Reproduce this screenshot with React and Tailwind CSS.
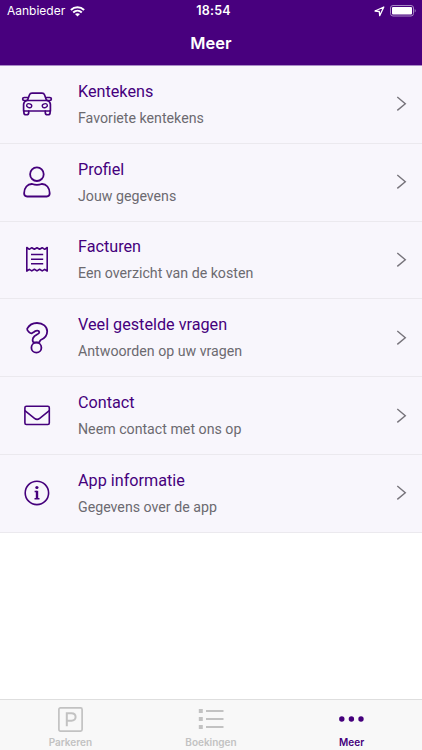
const iconProps = {
  className: 'h-9 w-9 shrink-0',
  viewBox: '0 0 36 36',
  fill: 'none',
  stroke: 'currentColor',
  strokeWidth: 1.8,
  strokeLinecap: 'round',
  strokeLinejoin: 'round',
}

function CarIcon() {
  return (
    <svg {...iconProps} strokeWidth={1.7}>
      <path d="M8.400 14.500l2-5.500c.5-1.300 1.300-1.800 2.600-1.800h10c1.300 0 2.100.5 2.600 1.800l2 5.500z" />
      <path d="M8.500 11.500H5.300c-2.200 0-2.200 3 0 3h2.200M27.500 11.500h3.200c2.200 0 2.200 3 0 3h-2.200" />
      <path d="M7.600 14.500c-2 .8-3 2-3 4V25h26.800v-6.500c0-2-1-3.200-3-4" />
      <path d="M4.900 25v1.700c0 2.700 4.800 2.700 4.800 0V25M26.300 25v1.700c0 2.700 4.800 2.700 4.800 0V25" />
      <g strokeWidth="1.300">
        <ellipse cx="10.200" cy="19.700" rx="2.600" ry="1.900" transform="rotate(18 10.200 19.700)" />
        <ellipse cx="25.800" cy="19.700" rx="2.600" ry="1.900" transform="rotate(-18 25.800 19.700)" />
      </g>
    </svg>
  )
}

function PersonIcon() {
  return (
    <svg {...iconProps}>
      <circle cx="17.900" cy="10.200" r="6.800" />
      <path d="M13.200 20c2.900 1.100 6.500 1.100 9.400 0 4.700-.3 8.100 3.900 8.100 9.300 0 2.200-.9 3.200-3 3.200H8.100c-2.100 0-3-1-3-3.200 0-5.400 3.400-9.600 8.100-9.300z" />
    </svg>
  )
}

function ReceiptIcon() {
  return (
    <svg {...iconProps} strokeWidth={1.600} strokeLinecap="butt">
      <path d="M7.800 5.500l2.500 1.800 2.500-1.600 2.600 1.600L18 5.700l2.600 1.600 2.600-1.600 2.500 1.600 2.500-1.800v23.600l-2.500-1.800-2.500 1.600-2.600-1.600-2.600 1.600-2.600-1.600-2.600 1.600-2.500-1.600-2.500 1.800z" />
      <path d="M12 12.500h12.200M12 17.200h12.200M12 21.800h12.200" />
    </svg>
  )
}

function QuestionIcon() {
  return (
    <svg {...iconProps}>
      <path d="M8.200 8.600C10.200 5 13.400 3 18 3c6 0 10.200 3.600 10.200 8.300 0 5-3.200 7.400-6.500 8.700-1 .4-.7 1.900-1.500 2.300h-5.700c-1-.5-1.100-2.700-.4-4.300 1.700-3.600 6.500-3.500 6.200-5.900-.3-2.100-3.700-2-5.800.2l-1.700 1c-1.400.5-5.200-2.900-4.600-4.700z" />
      <circle cx="17.400" cy="27.700" r="5" />
    </svg>
  )
}

function MailIcon() {
  return (
    <svg {...iconProps} strokeWidth={1.600}>
      <rect x="5.900" y="8.300" width="24.400" height="18.200" rx="1.500" />
      <path d="M6.200 12.900l9.300 7.400c1.800 1.400 3.400 1.400 5.200 0l9.300-7.400" />
    </svg>
  )
}

function InfoIcon() {
  return (
    <svg {...iconProps} strokeWidth={1.600}>
      <circle cx="17.900" cy="17.900" r="11.700" />
      <circle cx="17.900" cy="12.500" r="1.600" fill="currentColor" stroke="none" />
      <path d="M15.600 16.500H18M15.500 23.700h5" strokeWidth="1.400" strokeLinecap="butt" />
      <path d="M18 15.800v8" strokeWidth="2.400" strokeLinecap="butt" />
    </svg>
  )
}

const items = [
  { title: 'Kentekens', subtitle: 'Favoriete kentekens', Icon: CarIcon },
  { title: 'Profiel', subtitle: 'Jouw gegevens', Icon: PersonIcon },
  { title: 'Facturen', subtitle: 'Een overzicht van de kosten', Icon: ReceiptIcon },
  { title: 'Veel gestelde vragen', subtitle: 'Antwoorden op uw vragen', Icon: QuestionIcon },
  { title: 'Contact', subtitle: 'Neem contact met ons op', Icon: MailIcon },
  { title: 'App informatie', subtitle: 'Gegevens over de app', Icon: InfoIcon },
]

function StatusBar() {
  return (
    <div className="grid h-[22px] grid-cols-3 items-center pr-[6px] pl-[7px] text-[12.500px]">
      <div className="flex items-center gap-[5px]">
        <span className="text-[12px]">Aanbieder</span>
        <svg className="h-[11px] w-[15px]" viewBox="0 0 15 11" fill="none" stroke="currentColor" strokeWidth="2">
          <path d="M.9 4C4.700.4 10.300.4 14.100 4M3.200 6.500c2.500-2.400 6.100-2.400 8.600 0" />
          <path d="M7.500 10.600L5 8.100c1.400-1.300 3.600-1.300 5 0z" fill="currentColor" stroke="none" />
        </svg>
      </div>
      <span className="pl-1 text-center font-semibold tracking-[0.250px]">18:54</span>
      <div className="flex items-center justify-end gap-[5px]">
        <svg className="h-[11px] w-[11px]" viewBox="0 0 11 11" fill="none" stroke="currentColor" strokeWidth="1.300" strokeLinejoin="round">
          <path d="M9.800 1L1 5l4.300.5.400 4.200z" />
        </svg>
        <svg className="h-[12px] w-[26px]" viewBox="0 0 26 12">
          <rect x=".5" y=".5" width="23" height="10.500" rx="2.500" fill="none" stroke="#a688c4" />
          <rect x="2" y="2" width="20" height="7.500" rx="1" fill="white" />
          <path d="M24.700 4v3.500c1.300-.6 1.300-2.900 0-3.500z" fill="#a688c4" />
        </svg>
      </div>
    </div>
  )
}

function MenuRow({ title, subtitle, Icon }) {
  return (
    <li className="flex h-[77.800px] items-center border-b border-[#ebe9ee] pr-[15px] pl-[19px]">
      <span className="text-[#45007c]">
        <Icon />
      </span>
      <div className="ml-[23px] flex-1 pt-px">
        <p className="text-[16.200px] leading-[26px] text-[#45007c]">{title}</p>
        <p className="text-[14.200px] leading-[26px] text-[#6c6a70]">{subtitle}</p>
      </div>
      <svg className="h-4 w-[11px]" viewBox="0 0 11 16" fill="none" stroke="#77747b" strokeWidth="1.400">
        <path d="M1.300 1L9.300 7.700l-8 6.700" />
      </svg>
    </li>
  )
}

function TabBar() {
  return (
    <nav className="grid h-[51px] grid-cols-3 border-t border-[#dedede] bg-[#f8f8f8] text-[10px] font-semibold text-[#c2c2c2]">
      <div className="flex flex-col items-center pt-[7px]">
        <svg className="h-[25px] w-[25px]" viewBox="0 0 25 25" fill="none" stroke="currentColor" strokeWidth="1.700">
          <rect x=".9" y=".9" width="23.200" height="23.200" rx="1.500" />
          <path d="M8.800 19.200V6.200h4.600c5.600 0 5.600 7.600 0 7.600H8.800" strokeWidth="2" />
        </svg>
        <span className="mt-[4px] leading-3">Parkeren</span>
      </div>
      <div className="flex flex-col items-center pt-[7px]">
        <svg className="h-[25px] w-[26px]" viewBox="0 0 26 25" fill="currentColor">
          <path d="M.8 2h4v4h-4zM.8 10h4v4h-4zM.8 18h4v4h-4zM8 3h17.500v2H8zM8 11h17.500v2H8zM8 19h17.500v2H8z" />
        </svg>
        <span className="mt-[4px] leading-3">Boekingen</span>
      </div>
      <div className="flex flex-col items-center pt-[7px] text-[#45007c]">
        <svg className="h-[25px] w-[26px]" viewBox="0 0 26 25" fill="currentColor">
          <circle cx="2.800" cy="12" r="2.700" />
          <circle cx="12.400" cy="12" r="2.700" />
          <circle cx="22" cy="12" r="2.700" />
        </svg>
        <span className="mt-[4px] leading-3 tracking-[0.100px]">Meer</span>
      </div>
    </nav>
  )
}

export default function App() {
  return (
    <div className="flex h-[750px] w-[422px] flex-col overflow-hidden bg-white font-['Inter',sans-serif]">
      <header className="h-[66px] shrink-0 border-b border-[#a98bc6] bg-[#48007e] text-white">
        <StatusBar />
        <h1 className="text-center text-[16.500px] leading-[43px] font-semibold">Meer</h1>
      </header>
      <main className="flex-1 font-['Roboto',sans-serif]">
        <ul className="bg-[#f8f6fc]">
          {items.map((item) => (
            <MenuRow key={item.title} {...item} />
          ))}
        </ul>
      </main>
      <TabBar />
    </div>
  )
}
